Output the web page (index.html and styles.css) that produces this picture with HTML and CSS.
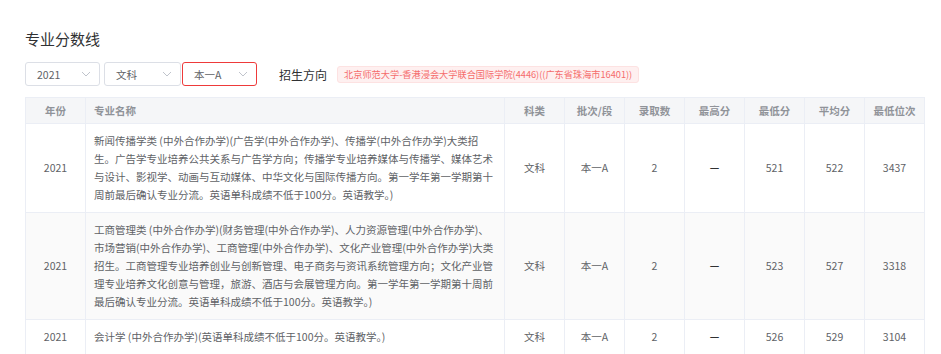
FILE: index.html
```html
<!DOCTYPE html>
<html lang="zh-CN">
<head>
<meta charset="utf-8">
<title>专业分数线</title>
<link rel="stylesheet" href="styles.css">
</head>
<body>
<div class="page">
  <h2 class="title">专业分数线</h2>
  <div class="filters">
    <div class="select"><span>2021</span><svg class="arrow" width="10" height="6" viewBox="0 0 10 6"><path d="M1 1l4 4 4-4" fill="none" stroke="#c0c4cc" stroke-width="1"/></svg></div>
    <div class="select s2"><span>文科</span><svg class="arrow" width="10" height="6" viewBox="0 0 10 6"><path d="M1 1l4 4 4-4" fill="none" stroke="#c0c4cc" stroke-width="1"/></svg></div>
    <div class="select active"><span>本一A</span><svg class="arrow" width="10" height="6" viewBox="0 0 10 6"><path d="M1 1l4 4 4-4" fill="none" stroke="#c0c4cc" stroke-width="1"/></svg></div>
    <span class="label">招生方向</span>
    <span class="tag">北京师范大学-香港浸会大学联合国际学院(4446)((广东省珠海市16401))</span>
  </div>
  <table class="grid">
    <colgroup>
      <col class="c-year"><col class="c-name"><col class="c-n"><col class="c-n"><col class="c-n"><col class="c-n"><col class="c-n"><col class="c-n"><col class="c-n">
    </colgroup>
    <thead>
      <tr>
        <th>年份</th><th class="left">专业名称</th><th>科类</th><th>批次/段</th><th>录取数</th><th>最高分</th><th>最低分</th><th>平均分</th><th>最低位次</th>
      </tr>
    </thead>
    <tbody>
      <tr>
        <td>2021</td>
        <td class="left">新闻传播学类 (中外合作办学)(广告学(中外合作办学)、传播学(中外合作办学)大类招<br>生。广告学专业培养公共关系与广告学方向；传播学专业培养媒体与传播学、媒体艺术<br>与设计、影视学、动画与互动媒体、中华文化与国际传播方向。第一学年第一学期第十<br>周前最后确认专业分流。英语单科成绩不低于100分。英语教学。)</td>
        <td>文科</td><td>本一A</td><td>2</td><td class="dash">—</td><td>521</td><td>522</td><td>3437</td>
      </tr>
      <tr class="striped">
        <td>2021</td>
        <td class="left">工商管理类 (中外合作办学)(财务管理(中外合作办学)、人力资源管理(中外合作办学)、<br>市场营销(中外合作办学)、工商管理(中外合作办学)、文化产业管理(中外合作办学)大类<br>招生。工商管理专业培养创业与创新管理、电子商务与资讯系统管理方向；文化产业管<br>理专业培养文化创意与管理，旅游、酒店与会展管理方向。第一学年第一学期第十周前<br>最后确认专业分流。英语单科成绩不低于100分。英语教学。)</td>
        <td>文科</td><td>本一A</td><td>2</td><td class="dash">—</td><td>523</td><td>527</td><td>3318</td>
      </tr>
      <tr>
        <td>2021</td>
        <td class="left">会计学 (中外合作办学)(英语单科成绩不低于100分。英语教学。)</td>
        <td>文科</td><td>本一A</td><td>2</td><td class="dash">—</td><td>526</td><td>529</td><td>3104</td>
      </tr>
    </tbody>
  </table>
</div>
</body>
</html>
```
FILE: styles.css
```css
* { box-sizing: border-box; }
html, body { margin: 0; padding: 0; background: #fff; }
body {
  font-family: "Noto Sans CJK SC", "Noto Sans", sans-serif;
  color: #606266;
}
.page { padding: 29px 0 0 25px; }
.title {
  margin: 0;
  font-size: 15px;
  line-height: 20px;
  font-weight: normal;
  color: #303133;
}
.filters {
  display: flex;
  align-items: center;
  margin-top: 13px;
  height: 24px;
}
.select {
  width: 75px;
  height: 24px;
  border: 1px solid #dcdfe6;
  border-radius: 3px;
  display: flex;
  align-items: center;
  justify-content: space-between;
  padding: 0 8px 0 11px;
  font-size: 10.5px;
  color: #606266;
  margin-right: 4px;
}
.select.s2 { width: 77px; margin-right: 1px; }
.select.active { border-color: #ee3a3a; }
.arrow { display: block; }
.label {
  margin-left: 18px;
  font-size: 12px;
  color: #303133;
}
.tag {
  margin-left: 10px;
  height: 17px;
  line-height: 15px;
  padding: 0 6px;
  font-size: 9.2px;
  color: #f56c6c;
  background: #fef0f0;
  border: 1px solid #fde2e2;
  border-radius: 3px;
  white-space: nowrap;
}
.grid {
  margin-top: 11px;
  border-collapse: collapse;
  table-layout: fixed;
  width: 899px;
  font-size: 10.5px;
  border: 1px solid #ebeef5;
}
.c-year { width: 60px; }
.c-name { width: 419px; }
.c-n { width: 60px; }
.grid th, .grid td {
  border: 1px solid #ebeef5;
  text-align: center;
  vertical-align: middle;
}
.grid th {
  background: #f5f6f8;
  color: #909399;
  font-weight: bold;
  line-height: 17px;
  padding: 4px 8px;
}
.grid td {
  line-height: 18px;
  padding: 8px 8px;
  color: #606266;
}
.grid td.dash { font-weight: bold; color: #303133; }
.grid .left { text-align: left; }
.grid .striped td { background: #fafafa; }
```
